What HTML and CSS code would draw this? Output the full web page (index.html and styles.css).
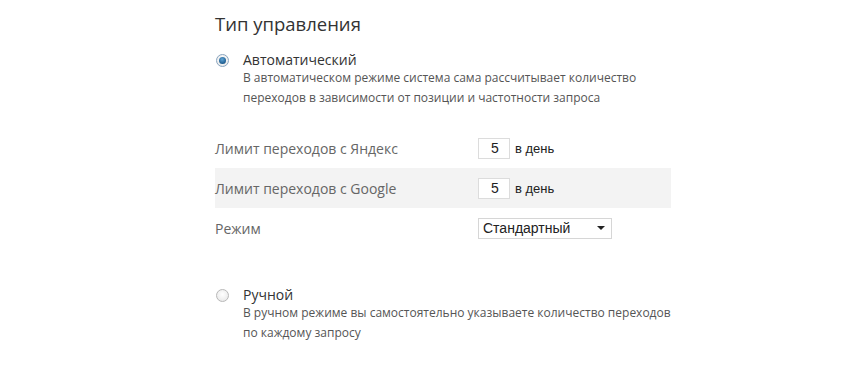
FILE: index.html
```html
<!DOCTYPE html>
<html lang="ru">
<head>
<meta charset="utf-8">
<link rel="stylesheet" href="styles.css">
</head>
<body>
<div class="page">
  <h1 class="title">Тип управления</h1>

  <div class="option">
    <span class="radio checked"></span>
    <div class="option-body">
      <div class="option-name">Автоматический</div>
      <div class="option-desc">В автоматическом режиме система сама рассчитывает количество<br>переходов в зависимости от позиции и частотности запроса</div>
    </div>
  </div>

  <div class="settings">
    <div class="row">
      <div class="label">Лимит переходов с Яндекс</div>
      <div class="control"><span class="num">5</span><span class="unit">в день</span></div>
    </div>
    <div class="row shaded">
      <div class="label">Лимит переходов с Google</div>
      <div class="control"><span class="num">5</span><span class="unit">в день</span></div>
    </div>
    <div class="row">
      <div class="label">Режим</div>
      <div class="control"><span class="select">Стандартный<span class="caret"></span></span></div>
    </div>
  </div>

  <div class="option manual">
    <span class="radio"></span>
    <div class="option-body">
      <div class="option-name">Ручной</div>
      <div class="option-desc">В ручном режиме вы самостоятельно указываете количество переходов<br>по каждому запросу</div>
    </div>
  </div>
</div>
</body>
</html>
```

FILE: styles.css
```css
html, body {
  margin: 0;
  padding: 0;
  background: #ffffff;
}
body {
  font-family: "Open Sans", "Noto Sans", sans-serif;
  color: #555;
}
.page {
  width: 456px;
  margin-left: 215px;
  padding-top: 10px;
}
.title {
  margin: 0;
  font-size: 18.5px;
  font-weight: 400;
  color: #333;
  line-height: 28px;
}
.option {
  display: flex;
  align-items: flex-start;
  margin-top: 13px;
}
.radio {
  flex: none;
  width: 11px;
  height: 11px;
  border-radius: 50%;
  border: 1px solid #b8b8b8;
  background: radial-gradient(circle at 50% 40%, #ffffff 0%, #e4e4e4 100%);
  margin: 3px 14px 0 1px;
  position: relative;
  box-sizing: content-box;
}
.radio.checked {
  border-color: #8aa5bf;
}
.radio.checked::after {
  content: "";
  position: absolute;
  left: 2px;
  top: 2px;
  width: 7px;
  height: 7px;
  border-radius: 50%;
  background: radial-gradient(circle at 45% 35%, #5fa4d6 0%, #1e5d8f 70%, #163e66 100%);
}
.option-name {
  font-size: 14px;
  line-height: 18px;
  color: #333;
}
.option-desc {
  font-size: 12px;
  line-height: 20px;
  color: #555;
  margin-top: -1px;
}
.settings {
  margin-top: 20px;
}
.row {
  display: flex;
  align-items: center;
  height: 40px;
}
.row.shaded {
  background: #f3f3f3;
}
.label {
  width: 263px;
  font-size: 14px;
  color: #666;
}
.control {
  display: flex;
  align-items: center;
  font-family: "Liberation Sans", Arial, sans-serif;
  color: #222;
}
.num {
  width: 32px;
  height: 21px;
  border: 1px solid #dcdcdc;
  background: #fff;
  box-sizing: border-box;
  text-align: center;
  font-size: 14px;
  line-height: 19px;
  padding-left: 2px;
}
.unit {
  font-size: 13px;
  margin-left: 5px;
}
.select {
  display: flex;
  align-items: center;
  justify-content: space-between;
  width: 134px;
  height: 21px;
  box-sizing: border-box;
  border: 1px solid #d6d6d6;
  padding: 0 6px 0 4px;
  font-size: 14px;
  background: #fff;
}
.caret {
  width: 0;
  height: 0;
  border-left: 4px solid transparent;
  border-right: 4px solid transparent;
  border-top: 4px solid #222;
}
.manual {
  margin-top: 38px;
}
```
